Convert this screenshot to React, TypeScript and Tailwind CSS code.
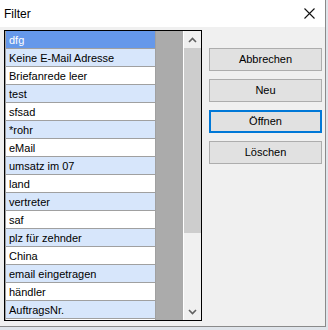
const items = [
  "dfg",
  "Keine E-Mail Adresse",
  "Briefanrede leer",
  "test",
  "sfsad",
  "*rohr",
  "eMail",
  "umsatz im 07",
  "land",
  "vertreter",
  "saf",
  "plz für zehnder",
  "China",
  "email eingetragen",
  "händler",
  "AuftragsNr.",
];

function Chevron({ down }: { down?: boolean }) {
  return (
    <svg width="9" height="6" viewBox="0 0 9 6" className={down ? "rotate-180" : ""}>
      <path d="M1 5 L4.5 1.5 L8 5" fill="none" stroke="#606060" strokeWidth="1.6" />
    </svg>
  );
}

function DialogButton({ label, focused }: { label: string; focused?: boolean }) {
  return (
    <button
      className={`flex h-[23px] w-[113px] items-center justify-center bg-[#e1e1e1] text-[11px] text-black ${
        focused ? "border-2 border-[#0078d7]" : "border border-[#adadad]"
      }`}
    >
      {label}
    </button>
  );
}

export default function App() {
  return (
    <div
      className="h-[330px] w-[328px] overflow-hidden bg-[#dfe4ea]"
      style={{ fontFamily: '"Liberation Sans", Arial, sans-serif' }}
    >
      <div className="flex h-[327px] w-[326px] flex-col border-r border-b border-[#8a8a8a] bg-[#f0f0f0]">
        {/* title bar */}
        <div className="flex h-[27px] items-center justify-between bg-white pl-[4px] pr-[10px]">
          <span className="text-[12px] text-black">Filter</span>
          <svg width="11" height="11" viewBox="0 0 11 11">
            <path d="M0.5 0.5 L10.5 10.5 M10.5 0.5 L0.5 10.5" stroke="#111" strokeWidth="1.1" />
          </svg>
        </div>

        <div className="flex">
          {/* list box */}
          <div className="ml-[4px] mt-[3px] flex h-[291px] w-[198px] border border-black bg-white">
            <div className="flex w-[151px] flex-col border-x border-[#a0a0a0]">
              {items.map((item, i) => (
                <div
                  key={item}
                  className={`flex h-[18px] shrink-0 items-center border-b border-[#a0a0a0] pl-[3px] pt-px text-[11px] ${
                    i === 0
                      ? "bg-[#6598ea] text-white"
                      : i % 2 === 1
                        ? "bg-[#d7e6fb] text-black"
                        : "bg-white text-black"
                  }`}
                >
                  {item}
                </div>
              ))}
            </div>
            <div className="w-[27px] bg-[#ababab]" />
            <div className="w-px bg-white" />
            <div className="flex w-[17px] flex-col bg-[#f0f0f0]">
              <div className="flex h-[17px] items-center justify-center">
                <Chevron />
              </div>
              <div className="h-[185px] bg-[#cdcdcd]" />
              <div className="flex-1" />
              <div className="flex h-[17px] items-center justify-center">
                <Chevron down />
              </div>
            </div>
          </div>

          {/* buttons */}
          <div className="ml-[7px] mt-[21px] flex flex-col gap-[8px]">
            <DialogButton label="Abbrechen" />
            <DialogButton label="Neu" />
            <DialogButton label="Öffnen" focused />
            <DialogButton label="Löschen" />
          </div>
        </div>
      </div>
    </div>
  );
}
